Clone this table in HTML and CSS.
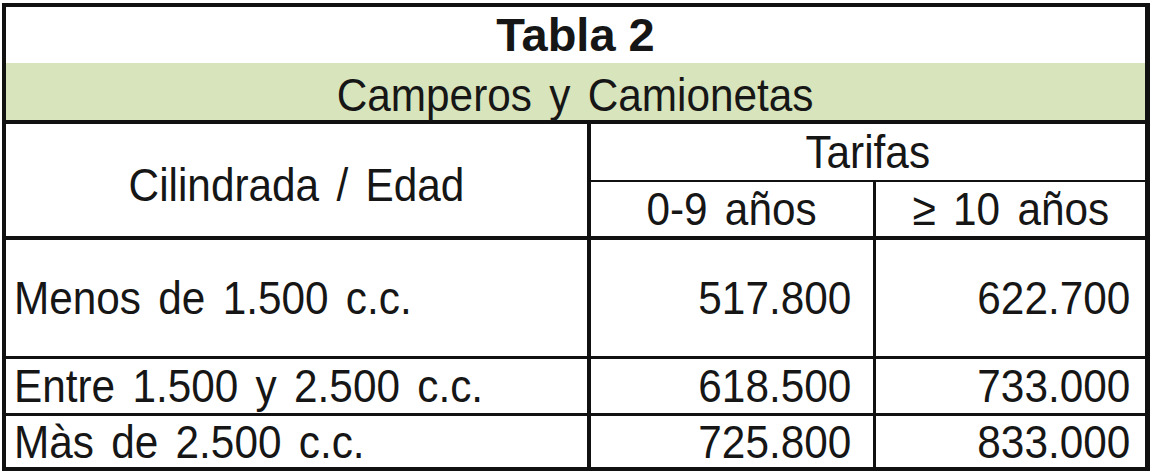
FILE: index.html
```html
<!DOCTYPE html>
<html lang="es">
<head>
<meta charset="utf-8">
<title>Tabla 2</title>
<link rel="stylesheet" href="styles.css">
</head>
<body>
<div class="sheet">
  <div class="c title"><span class="t b">Tabla 2</span></div>
  <div class="c sub"><span class="t">Camperos y Camionetas</span></div>
  <div class="c hdr"><span class="t">Cilindrada / Edad</span></div>
  <div class="c tar"><span class="t">Tarifas</span></div>
  <div class="c age mid"><span class="t">0-9 años</span></div>
  <div class="c age"><span class="t">≥ 10 años</span></div>

  <div class="c lbl sep"><span class="t">Menos de 1.500 c.c.</span></div>
  <div class="c num mid sep"><span class="t">517.800</span></div>
  <div class="c num end sep"><span class="t">622.700</span></div>

  <div class="c lbl sep"><span class="t">Entre 1.500 y 2.500 c.c.</span></div>
  <div class="c num mid sep"><span class="t">618.500</span></div>
  <div class="c num end sep"><span class="t">733.000</span></div>

  <div class="c lbl"><span class="t">Màs de 2.500 c.c.</span></div>
  <div class="c num mid"><span class="t">725.800</span></div>
  <div class="c num end"><span class="t">833.000</span></div>
</div>
</body>
</html>
```
FILE: styles.css
```css
html, body {
  margin: 0;
  padding: 0;
  background: #ffffff;
}

.sheet {
  display: grid;
  width: max-content;
  grid-template-columns: 585px 285px 269px;
  grid-template-rows: 56px 61px 58px 58px 119px 57px 51px;
  margin: 3px 0 0 2px;
  border: 4px solid #111;
  border-right-width: 5px;
  font-family: "Liberation Sans", Arial, sans-serif;
  font-size: 46px;
  color: #161616;
}

.c {
  box-sizing: border-box;
  display: flex;
  align-items: center;
  justify-content: center;
  line-height: 46px;
  white-space: nowrap;
  min-width: 0;
}

.t {
  display: inline-block;
  transform: scaleX(0.92);
  transform-origin: center;
  word-spacing: 6px;
}

.t.b {
  font-weight: bold;
  font-size: 47px;
  transform: none;
  word-spacing: 0;
}

.title {
  grid-column: 1 / -1;
}

.sub {
  grid-column: 1 / -1;
  background: #d8e4bc;
  border-bottom: 4px solid #111;
  align-items: flex-end;
  line-height: 50px;
}

.hdr {
  grid-row: span 2;
  border-right: 4px solid #111;
  border-bottom: 4px solid #111;
  padding-top: 10px;
}

.tar {
  grid-column: 2 / span 2;
  border-bottom: 2px solid #111;
}

.age {
  border-bottom: 4px solid #111;
}

.mid {
  border-right: 3px solid #111;
}

.lbl {
  justify-content: flex-start;
  border-right: 4px solid #111;
  padding-left: 8px;
}

.lbl .t {
  transform-origin: left center;
}

.num {
  justify-content: flex-end;
}

.num .t {
  transform-origin: right center;
}

.num.mid {
  padding-right: 22px;
}

.num.end {
  padding-right: 15px;
}

.sep {
  border-bottom: 3px solid #111;
}
```
